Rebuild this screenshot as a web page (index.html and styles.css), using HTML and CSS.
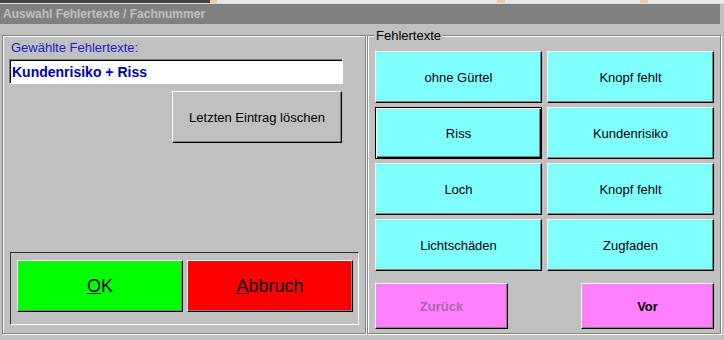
FILE: index.html
```html
<!DOCTYPE html>
<html>
<head>
  <meta charset="UTF-8">
  <title>Auswahl Fehlertexte / Fachnummer</title>
  <link rel="stylesheet" href="styles.css">
</head>
<body>
  <div class="top-strip">
    <span class="seg dark" style="width: 210px"></span>
    <span class="seg peach" style="width: 7px"></span>
    <span class="seg light" style="width: 280px"></span>
    <span class="seg peach" style="width: 8px"></span>
    <span class="seg light" style="width: 135px"></span>
    <span class="seg peach" style="width: 8px"></span>
    <span class="seg light" style="width: 76px"></span>
  </div>

  <div class="title-bar">Auswahl Fehlertexte / Fachnummer</div>

  <div class="dialog">
    <div class="group left-group">
      <label class="field-label" for="selectedTexts">Gewählte Fehlertexte:</label>
      <input type="text" id="selectedTexts" class="text-field" value="Kundenrisiko + Riss" readonly>

      <div class="delete-row">
        <button class="btn btn-gray delete-btn">Letzten Eintrag löschen</button>
      </div>

      <div class="action-frame">
        <button class="btn btn-ok"><u>O</u>K</button>
        <button class="btn btn-cancel"><u>A</u>bbruch</button>
      </div>
    </div>

    <div class="group right-group">
      <span class="legend">Fehlertexte</span>

      <div class="text-grid">
        <button class="btn btn-cyan">ohne Gürtel</button>
        <button class="btn btn-cyan">Knopf fehlt</button>
        <button class="btn btn-cyan focused">Riss</button>
        <button class="btn btn-cyan">Kundenrisiko</button>
        <button class="btn btn-cyan">Loch</button>
        <button class="btn btn-cyan">Knopf fehlt</button>
        <button class="btn btn-cyan">Lichtschäden</button>
        <button class="btn btn-cyan">Zugfaden</button>
      </div>

      <div class="nav-row">
        <button class="btn btn-pink disabled">Zurück</button>
        <button class="btn btn-pink">Vor</button>
      </div>
    </div>
  </div>
</body>
</html>
```

FILE: styles.css
```css
body {
  margin: 0;
  width: 724px;
  height: 340px;
  overflow: hidden;
  background-color: #c0c0c0;
  font-family: "Liberation Sans", Arial, sans-serif;
  font-size: 13px;
  color: #000;
}

/* Fenster dahinter (oberer Rand) */
.top-strip {
  display: flex;
  height: 3px;
  border-bottom: 1px solid #e0e0e0;
}

.seg {
  display: block;
  height: 3px;
}

.seg.dark { background-color: #404040; }
.seg.peach { background-color: #f4c8a0; }
.seg.light { background-color: #e8e8e8; }

.title-bar {
  height: 20px;
  line-height: 20px;
  width: 717px;
  padding-left: 3px;
  background-color: #808080;
  color: #c0c0c0;
  font-weight: bold;
  font-size: 12px;
}

.dialog {
  display: flex;
  padding: 11px 0 0 2px;
  gap: 1px;
}

/* Gruppenrahmen, eingeprägt */
.group {
  position: relative;
  box-sizing: border-box;
  height: 299px;
  border: 1px solid #808080;
  box-shadow: 1px 1px 0 #fff, inset 1px 1px 0 #fff;
}

.left-group {
  width: 364px;
  display: flex;
  flex-direction: column;
  padding: 4px 6px 8px 6px;
}

.field-label {
  display: block;
  line-height: 16px;
  margin-left: 2px;
  color: #1c1cc8;
}

.text-field {
  box-sizing: border-box;
  width: 334px;
  height: 25px;
  margin: 3px 0 0 0;
  padding: 0 2px;
  border: 1px solid;
  border-color: #808080 #fff #fff #808080;
  box-shadow: inset 1px 1px 0 #000;
  background-color: #fff;
  font-family: "Liberation Sans", Arial, sans-serif;
  font-size: 14px;
  font-weight: bold;
  color: #0000a8;
  outline: none;
}

.delete-row {
  display: flex;
  justify-content: flex-end;
  width: 334px;
  margin-top: 7px;
}

/* Windows-Knöpfe */
.btn {
  box-sizing: border-box;
  padding: 0;
  border: 1px solid;
  border-color: #fff #000 #000 #fff;
  box-shadow: inset -1px -1px 0 #808080;
  font-family: "Liberation Sans", Arial, sans-serif;
  font-size: 13px;
  color: #000;
  cursor: pointer;
}

.btn-gray {
  background-color: #c0c0c0;
}

.delete-btn {
  width: 170px;
  height: 52px;
  margin-right: 1px;
}

.action-frame {
  display: flex;
  gap: 4px;
  box-sizing: border-box;
  width: 349px;
  height: 73px;
  margin: auto 0 0 1px;
  padding: 7px 5px 0 6px;
  border: 1px solid;
  border-color: #303030 #fff #fff #303030;
}

.btn-ok,
.btn-cancel {
  width: 166px;
  height: 52px;
  font-size: 18px;
}

.btn-ok { background-color: #00ff00; }
.btn-cancel { background-color: #ff0000; }

.right-group {
  width: 354px;
  padding: 15px 0 0 7px;
}

.legend {
  position: absolute;
  left: 6px;
  top: -8px;
  padding: 0 2px;
  line-height: 15px;
  background-color: #c0c0c0;
}

.text-grid {
  display: grid;
  grid-template-columns: 167px 167px;
  grid-auto-rows: 52px;
  column-gap: 5px;
  row-gap: 4px;
}

.btn-cyan {
  background-color: #80ffff;
}

.btn-cyan.focused {
  border-color: #000;
  box-shadow: inset 1px 1px 0 #fff, inset -1px -1px 0 #000, inset -2px -2px 0 #808080;
}

.nav-row {
  display: flex;
  justify-content: space-between;
  width: 339px;
  margin-top: 12px;
}

.btn-pink {
  width: 133px;
  height: 46px;
  background-color: #ff80ff;
  font-weight: bold;
}

.btn-pink.disabled {
  color: #a868a8;
}
```
